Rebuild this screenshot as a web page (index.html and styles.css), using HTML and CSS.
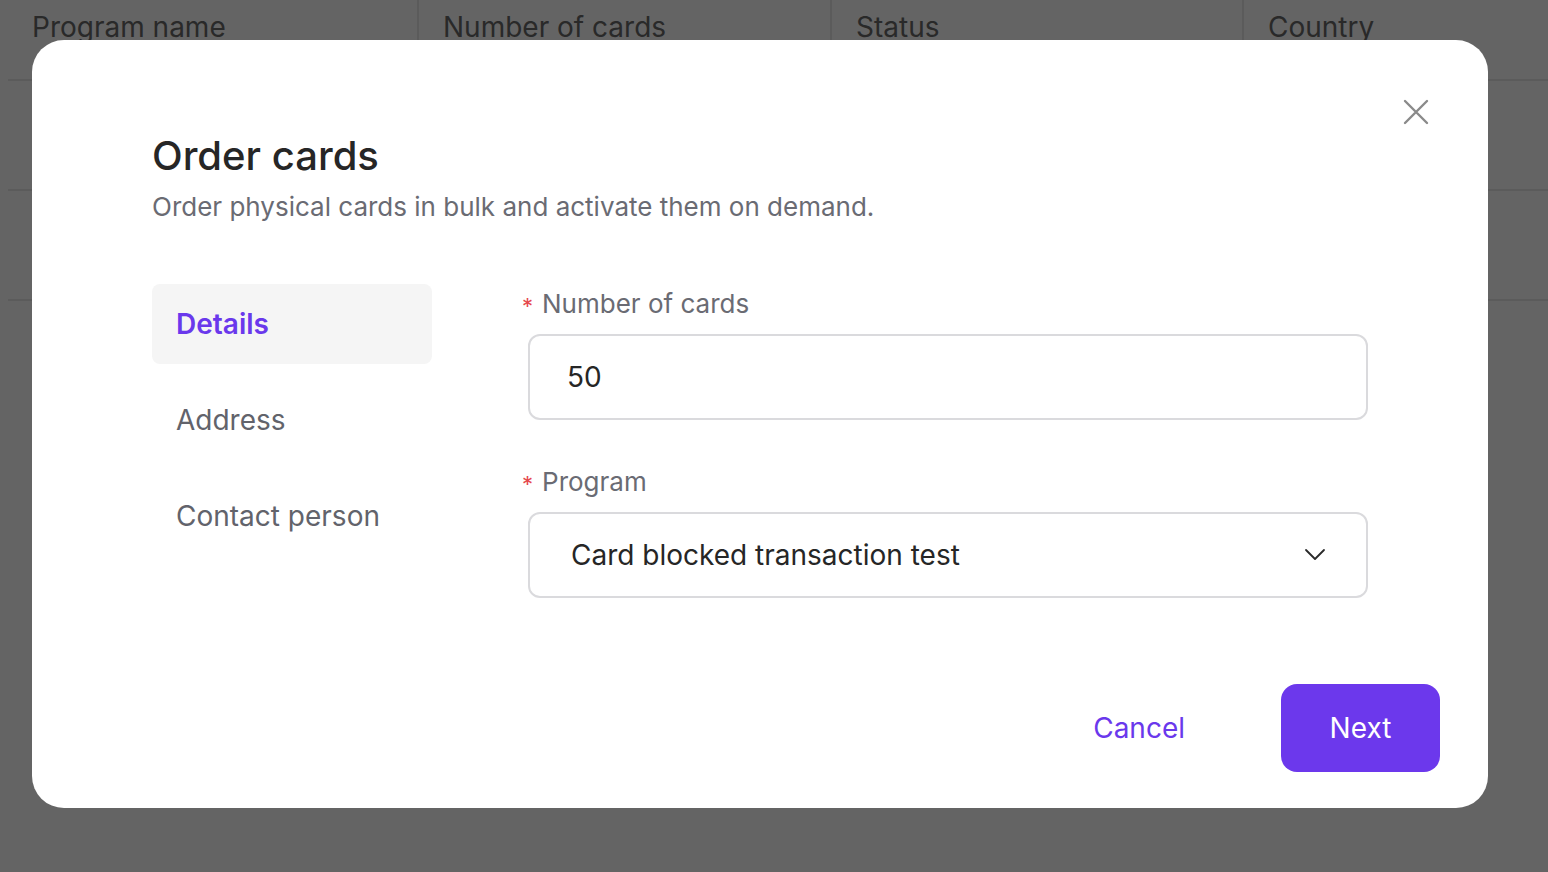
FILE: index.html
```html
<!DOCTYPE html>
<html lang="en">
<head>
<meta charset="utf-8">
<title>Order cards</title>
<link rel="stylesheet" href="styles.css">
</head>
<body>
<div class="page">
  <table class="table">
    <colgroup>
      <col class="col-a"><col class="col-b"><col class="col-c"><col class="col-d">
    </colgroup>
    <thead>
      <tr>
        <th>Program name</th>
        <th>Number of cards</th>
        <th>Status</th>
        <th>Country</th>
      </tr>
    </thead>
    <tbody>
      <tr><td></td><td></td><td></td><td></td></tr>
      <tr><td></td><td></td><td></td><td></td></tr>
    </tbody>
  </table>
</div>

<div class="overlay"></div>

<div class="modal" role="dialog" aria-labelledby="modal-title">
  <button class="close" aria-label="Close">
    <svg width="26" height="26" viewBox="0 0 26 26"><path d="M2 2 L24 24 M24 2 L2 24" stroke="#8a8a8a" stroke-width="2.4" fill="none" stroke-linecap="round"/></svg>
  </button>
  <h1 class="title" id="modal-title">Order cards</h1>
  <p class="subtitle">Order physical cards in bulk and activate them on demand.</p>

  <div class="body">
    <nav class="steps">
      <div class="step active">Details</div>
      <div class="step">Address</div>
      <div class="step">Contact person</div>
    </nav>
    <form class="form">
      <div class="field">
        <label class="label"><span class="req">*</span>Number of cards</label>
        <div class="input">50</div>
      </div>
      <div class="field">
        <label class="label"><span class="req">*</span>Program</label>
        <div class="input select">
          <span class="select-value">Card blocked transaction test</span>
          <svg width="22" height="14" viewBox="0 0 22 14"><polyline points="2,2 11,11 20,2" stroke="#2a2a2a" stroke-width="1.8" fill="none" stroke-linecap="round" stroke-linejoin="round"/></svg>
        </div>
      </div>
    </form>
  </div>

  <div class="footer">
    <button class="btn btn-link">Cancel</button>
    <button class="btn btn-primary">Next</button>
  </div>
</div>
</body>
</html>
```

FILE: styles.css
```css
* { box-sizing: border-box; }

html, body {
  margin: 0;
  padding: 0;
  height: 100%;
  background: #ffffff;
  font-family: Inter, "Noto Sans", "Liberation Sans", sans-serif;
  overflow: hidden;
}

.page {
  padding: 0 0 0 8px;
}

.table {
  width: 1540px;
  border-collapse: collapse;
  table-layout: fixed;
}

.col-a { width: 410px; }
.col-b { width: 413px; }
.col-c { width: 412px; }
.col-d { width: 305px; }

.table th {
  text-align: left;
  font-weight: 400;
  font-size: 28px;
  color: #6a6a6a;
  padding: 10px 24px 0;
  height: 80px;
  vertical-align: top;
  white-space: nowrap;
  border-bottom: 2px solid #e8e8e8;
  border-left: 2px solid #e8e8e8;
}

.table th:first-child { border-left: none; }

.table td {
  height: 110px;
  border-bottom: 2px solid #e8e8e8;
}

.overlay {
  position: fixed;
  inset: 0;
  background: rgba(0, 0, 0, 0.607);
}

.modal {
  position: fixed;
  left: 32px;
  top: 40px;
  width: 1456px;
  height: 768px;
  background: #ffffff;
  border-radius: 32px;
  padding: 92px 48px 36px 120px;
  display: flex;
  flex-direction: column;
}

.close {
  position: absolute;
  top: 59px;
  right: 59px;
  width: 26px;
  height: 26px;
  padding: 0;
  border: none;
  background: none;
  display: flex;
}

.title {
  margin: 0;
  font-size: 40px;
  line-height: 48px;
  font-weight: 500;
  color: #262626;
}

.subtitle {
  margin: 9px 0 0;
  font-size: 26px;
  line-height: 36px;
  color: #6a6b73;
}

.body {
  margin-top: 59px;
  margin-right: 72px;
  display: grid;
  grid-template-columns: 280px 1fr;
  column-gap: 96px;
}

.steps {
  display: flex;
  flex-direction: column;
  gap: 16px;
}

.step {
  height: 80px;
  border-radius: 8px;
  padding: 0 24px;
  display: flex;
  align-items: center;
  font-size: 28px;
  color: #62636b;
}

.step.active {
  background: #f5f5f5;
  color: #6a38ec;
  font-weight: 600;
}

.form {
  display: flex;
  flex-direction: column;
  gap: 44px;
  padding-top: 2px;
}

.field {
  display: flex;
  flex-direction: column;
  gap: 12px;
}

.label {
  display: flex;
  align-items: center;
  gap: 9px;
  height: 36px;
  font-size: 26px;
  line-height: 36px;
  color: #6a6b73;
  margin-left: -6px;
}

.req {
  color: #e5484d;
  font-size: 22px;
  line-height: 1;
  padding-top: 4px;
}

.input {
  height: 86px;
  border: 2px solid #dadadd;
  border-radius: 12px;
  padding: 0 37px;
  display: flex;
  align-items: center;
  font-size: 28px;
  color: #262626;
}

.select {
  justify-content: space-between;
  padding: 0 40px 0 41px;
}

.footer {
  margin-top: auto;
  display: flex;
  justify-content: flex-end;
  align-items: center;
  gap: 96px;
}

.btn {
  font-family: inherit;
  font-size: 28px;
  border: none;
  cursor: pointer;
}

.btn-link {
  background: none;
  color: #6a38ec;
  padding: 0;
}

.btn-primary {
  width: 159px;
  height: 88px;
  background: #6c38ec;
  color: #ffffff;
  border-radius: 16px;
}
```
